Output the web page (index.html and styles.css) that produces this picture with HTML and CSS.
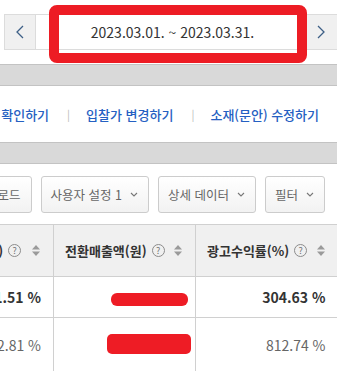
FILE: index.html
```html
<!DOCTYPE html>
<html lang="ko">
<head>
    <meta charset="UTF-8">
    <meta name="viewport" content="width=device-width, initial-scale=1.0">
    <title>성과 리포트</title>
    <link rel="stylesheet" href="styles.css">
</head>
<body>
    <div class="page">
        <div class="date-nav">
            <button class="nav-btn">
                <svg width="8" height="14" viewBox="0 0 8 14"><polyline points="7,1 1,7 7,13" fill="none" stroke="#3d5f86" stroke-width="1.3"/></svg>
            </button>
            <div class="date-range">2023.03.01. ~ 2023.03.31.</div>
            <button class="nav-btn">
                <svg width="8" height="14" viewBox="0 0 8 14"><polyline points="1,1 7,7 1,13" fill="none" stroke="#3d5f86" stroke-width="1.3"/></svg>
            </button>
        </div>
        <div class="highlight"></div>

        <div class="band"></div>

        <div class="links">
            <a href="#">성과 확인하기</a>
            <span class="sep">|</span>
            <a href="#">입찰가 변경하기</a>
            <span class="sep">|</span>
            <a href="#">소재(문안) 수정하기</a>
        </div>

        <div class="band"></div>

        <div class="toolbar">
            <button class="tool-btn">다운로드</button>
            <button class="tool-btn">사용자 설정 1 <svg class="caret" width="8" height="5" viewBox="0 0 8 5"><polyline points="1,1 4,4 7,1" fill="none" stroke="#777" stroke-width="1.1"/></svg></button>
            <button class="tool-btn">상세 데이터 <svg class="caret" width="8" height="5" viewBox="0 0 8 5"><polyline points="1,1 4,4 7,1" fill="none" stroke="#777" stroke-width="1.1"/></svg></button>
            <button class="tool-btn">필터 <svg class="caret" width="8" height="5" viewBox="0 0 8 5"><polyline points="1,1 4,4 7,1" fill="none" stroke="#777" stroke-width="1.1"/></svg></button>
        </div>

        <table class="report">
            <colgroup>
                <col class="c1">
                <col class="c2">
                <col class="c3">
            </colgroup>
            <thead>
                <tr>
                    <th><div class="th-inner"><span class="label">전환율(%)</span><span class="help">?</span><span class="sort"><svg width="8" height="11" viewBox="0 0 8 11"><polygon points="4,0 8,4.5 0,4.5" fill="#9a9a9a"/><polygon points="0,6.5 8,6.5 4,11" fill="#9a9a9a"/></svg></span></div></th>
                    <th><div class="th-inner"><span class="label">전환매출액(원)</span><span class="help">?</span><span class="sort"><svg width="8" height="11" viewBox="0 0 8 11"><polygon points="4,0 8,4.5 0,4.5" fill="#9a9a9a"/><polygon points="0,6.5 8,6.5 4,11" fill="#9a9a9a"/></svg></span></div></th>
                    <th><div class="th-inner"><span class="label">광고수익률(%)</span><span class="help">?</span><span class="sort"><svg width="8" height="11" viewBox="0 0 8 11"><polygon points="4,0 8,4.5 0,4.5" fill="#9a9a9a"/><polygon points="0,6.5 8,6.5 4,11" fill="#9a9a9a"/></svg></span></div></th>
                </tr>
            </thead>
            <tbody>
                <tr class="total">
                    <td>1.51 %</td>
                    <td><span class="redact small"></span></td>
                    <td>304.63 %</td>
                </tr>
                <tr class="item">
                    <td>2.81 %</td>
                    <td><span class="redact big"></span></td>
                    <td>812.74 %</td>
                </tr>
            </tbody>
        </table>
    </div>
</body>
</html>
```

FILE: styles.css
```css
body {
    margin: 0;
    font-family: "Noto Sans CJK KR", "Noto Sans", sans-serif;
    background-color: #ffffff;
    overflow: hidden;
}

.page {
    position: relative;
    width: 337px;
    height: 371px;
    overflow: hidden;
}

/* date navigation */
.date-nav {
    display: flex;
    height: 34px;
    margin: 14px -20px 14px 4px;
    border: 1px solid #dcdcdc;
}

.nav-btn {
    width: 31px;
    padding: 0;
    border: none;
    background-color: #f0f0f0;
    display: flex;
    align-items: center;
    justify-content: center;
    cursor: pointer;
}

.nav-btn:first-child {
    border-right: 1px solid #dcdcdc;
}

.nav-btn:last-child {
    width: 51px;
    padding-right: 20px;
    border-left: 1px solid #dcdcdc;
}

.date-range {
    flex: 1;
    display: flex;
    align-items: center;
    justify-content: center;
    font-size: 14px;
    color: #333;
    background-color: #fff;
    padding-left: 4px;
}

.highlight {
    position: absolute;
    left: 49px;
    top: 5px;
    width: 238px;
    height: 38px;
    border: 10px solid #ed1c24;
    border-radius: 8px;
}

/* gray separator bands */
.band {
    height: 20px;
    background-color: #d9d9d9;
    border-top: 1px solid #c3c3c3;
    border-bottom: 1px solid #c3c3c3;
}

.links {
    display: flex;
    justify-content: flex-end;
    align-items: center;
    height: 56px;
    padding-right: 18px;
    white-space: nowrap;
}

.links a {
    color: #2560c2;
    font-size: 13px;
    font-weight: 500;
    text-decoration: none;
}

.links .sep {
    color: #bbb;
    font-size: 11px;
    margin: 0 16px 0 18px;
}

/* toolbar */
.toolbar {
    display: flex;
    justify-content: flex-end;
    gap: 9px;
    padding: 12px 12px 11px 0;
    white-space: nowrap;
}

.tool-btn {
    flex-shrink: 0;
    height: 37px;
    padding: 0 10px 0 9px;
    border: 1px solid #cccccc;
    border-radius: 3px;
    background: linear-gradient(#ffffff, #f2f2f2);
    font-family: inherit;
    font-size: 12.5px;
    color: #666;
    display: flex;
    align-items: center;
    gap: 8px;
}

/* report table */
.report {
    border-collapse: collapse;
    table-layout: fixed;
    width: 404px;
    margin-left: -67px;
}

.report col.c1 { width: 120px; }
.report col.c2 { width: 142px; }
.report col.c3 { width: 142px; }

.report th {
    height: 51px;
    padding: 0 10px 0 11px;
    background-color: #f0f0f0;
    border-top: 1px solid #d0d0d0;
    border-bottom: 1px solid #d0d0d0;
    border-left: 1px solid #d0d0d0;
    font-size: 13px;
    font-weight: 700;
    color: #333;
    text-align: left;
}

.th-inner {
    display: flex;
    align-items: center;
    white-space: nowrap;
}

.help {
    width: 11px;
    height: 11px;
    margin-left: 5px;
    border: 1px solid #8c8c8c;
    border-radius: 50%;
    font-size: 9px;
    font-weight: 400;
    line-height: 11px;
    text-align: center;
    color: #777;
}

.sort {
    margin-left: auto;
    display: flex;
    padding-right: 3px;
}

.report td {
    padding: 0 12px;
    border-bottom: 1px solid #d0d0d0;
    border-left: 1px solid #d0d0d0;
    text-align: right;
    font-size: 14px;
    white-space: nowrap;
}

.report tr.total td {
    height: 40px;
    font-weight: 700;
    color: #333;
}

.report tr.item td {
    height: 53px;
    color: #666;
}

.redact {
    display: inline-block;
    vertical-align: middle;
    background-color: #ee1c25;
}

.redact.small {
    width: 77px;
    height: 13px;
    border-radius: 6px;
    margin-right: -5px;
}

.redact.big {
    width: 84px;
    height: 20px;
    border-radius: 5px;
    margin-right: -8px;
    margin-top: -6px;
}
```
